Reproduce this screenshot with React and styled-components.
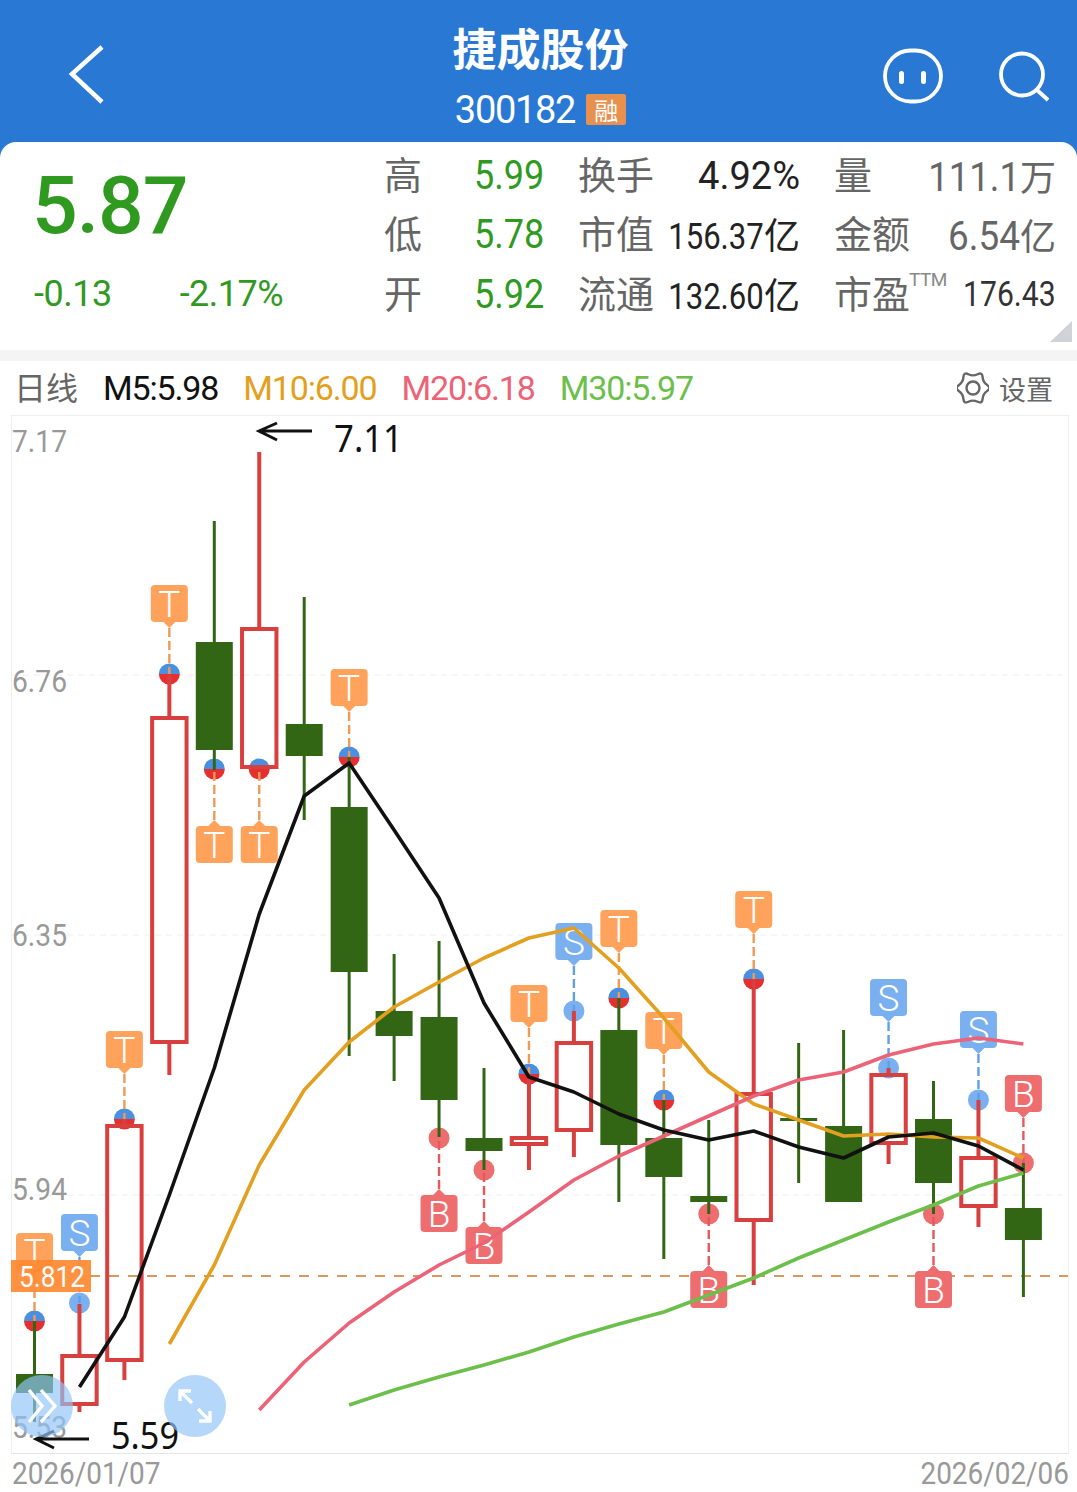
import React from "react";
import styled, { createGlobalStyle } from "styled-components";

const NUM = `"Roboto", "Noto Sans CJK SC", sans-serif`;
const CJK = `"Noto Sans CJK SC", "Roboto", sans-serif`;

const GlobalStyle = createGlobalStyle`
    html, body {
        margin: 0;
        padding: 0;
        background: #fff;
    }
    body {
        width: 1077px;
        height: 1492px;
        overflow: hidden;
        font-family: ${NUM};
    }
`;

const Page = styled.div`
    width: 1077px;
    height: 1492px;
    background: #fff;
    overflow: hidden;
`;

const Header = styled.header`
    height: 160px;
    background: #2878d4;
    display: grid;
    grid-template-columns: 1fr auto 1fr;
    align-items: start;
    color: #fff;
`;

const BackButton = styled.div`
    padding: 44px 0 0 68px;
    svg {
        display: block;
    }
`;

const TitleBlock = styled.div`
    display: flex;
    flex-direction: column;
    align-items: center;
    padding-top: 19px;
    margin-left: 4px;
`;

const Title = styled.div`
    font-family: ${CJK};
    font-weight: 700;
    font-size: 44px;
    line-height: 56px;
`;

const CodeRow = styled.div`
    display: flex;
    align-items: center;
    gap: 11px;
    margin-top: 10px;
`;

const Code = styled.span`
    font-family: ${NUM};
    font-size: 38px;
    line-height: 50px;
    letter-spacing: -1.3px;
`;

const Badge = styled.span`
    width: 40px;
    height: 31px;
    margin-bottom: 2px;
    border-radius: 2px;
    background: #e8914f;
    font-family: ${CJK};
    font-size: 24px;
    line-height: 31px;
    text-align: center;
`;

const HeaderIcons = styled.div`
    display: flex;
    justify-content: flex-end;
    gap: 56px;
    padding: 48px 28px 0 0;
`;

const Panel = styled.section`
    position: relative;
    height: 208px;
    margin-top: -18px;
    background: #fff;
    border-radius: 16px 16px 0 0;
    display: flex;
`;

const PriceBlock = styled.div`
    width: 384px;
    padding: 14px 0 0 34px;
    box-sizing: border-box;
    color: #2f9a1f;
`;

const Price = styled.div`
    font-family: ${NUM};
    font-weight: 500;
    font-size: 80.5px;
    line-height: 100px;
    letter-spacing: -1px;
    margin-left: -2px;
`;

const ChangeRow = styled.div`
    display: flex;
    gap: 68px;
    margin-top: 16px;
    font-size: 36px;
    line-height: 44px;
    letter-spacing: -0.5px;
`;

const StatsGrid = styled.div`
    padding-top: 4px;
    display: grid;
    grid-template-columns: 90px 104px 76px 146px 144px 112px;
    grid-auto-rows: 59.5px;
    align-items: center;
    width: 672px;
`;

const StatLabel = styled.span`
    font-family: ${CJK};
    font-size: 38px;
    line-height: 44px;
    color: #666;
    white-space: nowrap;
    position: relative;
    padding: 0 0 6px ${(p) => p.$indent || 0}px;
    sup {
        font-family: ${NUM};
        font-size: 19px;
        position: absolute;
        left: 109px;
        top: -2px;
        line-height: 24px;
        letter-spacing: -0.5px;
        color: #888;
    }
`;

const StatValue = styled.span`
    font-family: ${NUM};
    font-size: ${(p) => p.$size || 37}px;
    line-height: 44px;
    white-space: nowrap;
    color: ${(p) => p.$color};
    justify-self: ${(p) => (p.$left ? "start" : "end")};
    small {
        font-family: ${CJK};
        font-size: 36px;
    }
`;

const Digits = styled.span`
    display: inline-block;
    transform: scaleX(${(p) => p.$x || 1});
    transform-origin: ${(p) => (p.$left ? "left" : "right")} center;
`;

const CornerMark = styled.div`
    position: absolute;
    right: 5px;
    bottom: 8px;
    width: 22px;
    height: 21px;
    background: #cfd2d6;
    clip-path: polygon(100% 0, 100% 100%, 0 100%);
`;

const Divider = styled.div`
    height: 11px;
    background: #f4f4f4;
`;

const Toolbar = styled.div`
    height: 54px;
    padding: 0 24px 0 16px;
    display: flex;
    align-items: center;
    gap: 25px;
    font-size: 34px;
`;

const PeriodLabel = styled.span`
    font-family: ${CJK};
    font-size: 32px;
    color: #666;
    padding-bottom: 4px;
    margin-left: -2px;
`;

const MaText = styled.span`
    color: ${(p) => p.$color};
    letter-spacing: -1.15px;
`;

const Settings = styled.div`
    margin-left: auto;
    display: flex;
    align-items: center;
    gap: 10px;
    font-family: ${CJK};
    font-size: 27px;
    color: #666;
`;

const ChartBox = styled.div`
    position: relative;
    margin: 0 8px 0 11px;
    width: 1058px;
    height: 1039px;
    border: 1px solid #eee;
    border-bottom-color: #e6e6e6;
    box-sizing: border-box;
    svg {
        display: block;
        overflow: visible;
    }
`;

const FloatButton = styled.div`
    position: absolute;
    left: ${(p) => p.$left}px;
    top: 959px;
    width: 62px;
    height: 62px;
    border-radius: 50%;
    background: rgba(144, 196, 248, 0.68);
    display: flex;
    align-items: center;
    justify-content: center;
`;

const DateRow = styled.div`
    display: flex;
    justify-content: space-between;
    padding: 1px 8px 0 12px;
    font-size: 31px;
    line-height: 38px;
    color: #999;
`;

const GridLine = styled.line`
    stroke: #eee;
    stroke-width: 1;
    stroke-dasharray: 6 5;
`;

const AxisText = styled.text`
    font-family: ${NUM};
    font-size: 31px;
    fill: #999;
`;

const PriceLine = styled.line`
    stroke: #d8995f;
    stroke-width: 2;
    stroke-dasharray: 10 9;
`;

const CurrentBox = styled.rect`
    fill: #ff8a33;
    opacity: 0.93;
`;

const CurrentText = styled.text`
    font-family: ${NUM};
    font-size: 30px;
    fill: #fff;
`;

const Wick = styled.line`
    stroke: ${(p) => (p.$up ? "#d83f3f" : "#336614")};
    stroke-width: ${(p) => (p.$up ? 4 : 3)};
`;

const HollowBody = styled.rect`
    fill: none;
    stroke: #d83f3f;
    stroke-width: 4;
`;

const SolidBody = styled.rect`
    fill: #336614;
`;

const MaPath = styled.polyline`
    fill: none;
    stroke: ${(p) => p.$color};
    stroke-width: 3.6;
    stroke-linejoin: round;
`;

const Connector = styled.line`
    stroke: ${(p) => p.$color};
    stroke-width: 2.4;
    stroke-dasharray: 9 4;
`;

const TagText = styled.text`
    font-family: "Roboto", sans-serif;
    font-weight: 300;
    font-size: 37px;
    fill: #fff;
    text-anchor: middle;
`;

const Extreme = styled.text`
    font-family: "Noto Sans", sans-serif;
    font-size: 38px;
    fill: #111;
`;

const ArrowLine = styled.path`
    fill: none;
    stroke: #111;
    stroke-width: 3;
`;

const CX = (i) => 34.5 + i * 44.95;

// up, high, low, body top, body bottom (page pixels)
const candles = [
    [0, 1321, 1422, 1374, 1393],
    [1, 1304, 1412, 1356, 1404],
    [1, 1119, 1380, 1126, 1360],
    [1, 675, 1075, 718, 1042],
    [0, 521, 770, 642, 750],
    [1, 452, 768, 629, 767],
    [0, 597, 820, 724, 756],
    [0, 757, 1056, 807, 972],
    [0, 954, 1081, 1011, 1036],
    [0, 941, 1137, 1017, 1100],
    [0, 1068, 1170, 1138, 1151],
    [1, 1074, 1170, 1138, 1144],
    [1, 1011, 1157, 1043, 1130],
    [0, 998, 1202, 1030, 1145],
    [0, 1100, 1259, 1138, 1177],
    [0, 1120, 1214, 1196, 1202],
    [1, 979, 1285, 1094, 1220],
    [0, 1043, 1183, 1118, 1121],
    [0, 1030, 1202, 1126, 1202],
    [1, 1068, 1164, 1075, 1143],
    [0, 1081, 1214, 1119, 1183],
    [1, 1100, 1227, 1158, 1206],
    [0, 1163, 1297, 1208, 1240],
];

// kind, candle index, circle y, tag top y (tag under circle when below)
const markers = [
    ["T", 0, 1321, 1233],
    ["S", 1, 1303, 1214],
    ["T", 2, 1119, 1031],
    ["T", 3, 674, 585],
    ["T", 4, 769, 826],
    ["T", 5, 769, 826],
    ["T", 7, 757, 669],
    ["B", 9, 1138, 1195],
    ["B", 10, 1170, 1227],
    ["T", 11, 1074, 985],
    ["S", 12, 1011, 923],
    ["T", 13, 998, 910],
    ["T", 14, 1100, 1012],
    ["B", 15, 1214, 1271],
    ["T", 16, 979, 891],
    ["S", 19, 1068, 979],
    ["B", 20, 1214, 1271],
    ["S", 21, 1100, 1011],
    ["B", 22, 1163, 1075],
];

const markerColors = {
    T: { tag: "#ffa35c", line: "#ef9a55" },
    S: { tag: "#7ab0ef", line: "#5f9fe8" },
    B: { tag: "#ee6e70", line: "#e5585c" },
};

const ma5 = [1387, 1317, 1195, 1068, 914, 796, 763, 830, 898, 1003, 1077, 1092, 1114, 1130, 1140, 1131, 1147, 1158, 1137, 1133, 1146, 1170];
const ma10 = [1344, 1265, 1165, 1090, 1042, 1007, 982, 958, 938, 928, 968, 1018, 1072, 1104, 1120, 1136, 1134, 1137, 1138, 1158];
const ma20 = [1410, 1362, 1323, 1292, 1265, 1243, 1212, 1180, 1156, 1136, 1116, 1096, 1080, 1072, 1055, 1044, 1038, 1044];
const ma30 = [1405, 1390, 1377, 1365, 1352, 1337, 1324, 1312, 1295, 1278, 1258, 1240, 1222, 1205, 1186, 1173];

const points = (values, start) =>
    values.map((y, i) => `${CX(start + i)},${y}`).join(" ");

const tagPath = (x, top, below) => {
    const l = x - 18.5;
    const r = x + 18.5;
    const b = top + 37;
    return below
        ? `M${l + 4} ${top}H${x - 6}L${x} ${top - 6}L${x + 6} ${top}H${r - 4}Q${r} ${top} ${r} ${top + 4}V${b - 4}Q${r} ${b} ${r - 4} ${b}H${l + 4}Q${l} ${b} ${l} ${b - 4}V${top + 4}Q${l} ${top} ${l + 4} ${top}Z`
        : `M${l + 4} ${top}H${r - 4}Q${r} ${top} ${r} ${top + 4}V${b - 4}Q${r} ${b} ${r - 4} ${b}H${x + 6}L${x} ${b + 6}L${x - 6} ${b}H${l + 4}Q${l} ${b} ${l} ${b - 4}V${top + 4}Q${l} ${top} ${l + 4} ${top}Z`;
};

// wavy six-lobed outline of the settings gear
const gearPath = () => {
    const at = (k) => {
        const r = k % 2 === 0 ? 18.5 : 11.5;
        const a = (k * Math.PI) / 6;
        return [16 + r * Math.cos(a), 16 + r * Math.sin(a)];
    };
    const mid = (k) => {
        const [x1, y1] = at(k);
        const [x2, y2] = at(k + 1);
        return `${((x1 + x2) / 2).toFixed(2)} ${((y1 + y2) / 2).toFixed(2)}`;
    };
    let d = `M${mid(11)}`;
    for (let k = 0; k < 12; k++) {
        const [x, y] = at(k);
        d += `Q${x.toFixed(2)} ${y.toFixed(2)} ${mid(k)}`;
    }
    return `${d}Z`;
};

function Marker({ kind, index, y, top }) {
    const x = CX(index);
    const below = top > y;
    const colors = markerColors[kind];
    return (
        <g>
            {kind === "T" ? (
                <>
                    <path d={`M${x - 10.5} ${y}A10.5 10.5 0 0 1 ${x + 10.5} ${y}Z`} fill='#4a90e2' />
                    <path d={`M${x - 10.5} ${y}A10.5 10.5 0 0 0 ${x + 10.5} ${y}Z`} fill='#e5302f' />
                </>
            ) : (
                <circle cx={x} cy={y} r={10.5} fill={colors.tag} />
            )}
            <Connector
                x1={x}
                x2={x}
                y1={below ? top - 6 : top + 43}
                y2={y}
                $color={colors.line}
            />
            <path d={tagPath(x, top, below)} fill={colors.tag} />
            <TagText x={x} y={top + 32}>
                {kind}
            </TagText>
        </g>
    );
}

function Candle({ data, index }) {
    const [up, high, low, top, bottom] = data;
    const x = CX(index);
    return (
        <g>
            <Wick x1={x} x2={x} y1={high} y2={top} $up={up} />
            <Wick x1={x} x2={x} y1={bottom} y2={low} $up={up} />
            {up ? (
                <HollowBody x={x - 17.2} y={top} width={34.4} height={bottom - top} />
            ) : (
                <SolidBody x={x - 18.5} y={top} width={37} height={bottom - top} />
            )}
        </g>
    );
}

const axisLabels = [
    ["7.17", 452],
    ["6.76", 692],
    ["6.35", 946],
    ["5.94", 1200],
    ["5.53", 1438],
];

function Chart() {
    return (
        <svg width={1056} height={1037} viewBox='12 416 1056 1037'>
            {[675, 935, 1195].map((y) => (
                <GridLine key={y} x1={12} x2={1068} y1={y} y2={y} />
            ))}
            <PriceLine x1={90} x2={1068} y1={1276} y2={1276} />
            {markers.map(([kind, index, y, top]) => (
                <Marker key={index} kind={kind} index={index} y={y} top={top} />
            ))}
            <CurrentBox x={11} y={1260} width={80} height={32} />
            <CurrentText x={19} y={1287} textLength={66} lengthAdjust='spacingAndGlyphs'>
                5.812
            </CurrentText>
            {candles.map((c, i) => (
                <Candle key={i} data={c} index={i} />
            ))}
            <MaPath points={points(ma10, 3)} $color='#e3a020' />
            <MaPath points={points(ma20, 5)} $color='#ec6378' />
            <MaPath points={points(ma30, 7)} $color='#6cbf4b' />
            <MaPath points={points(ma5, 1)} $color='#111' />
            {axisLabels.map(([label, y]) => (
                <AxisText key={label} x={12} y={y} textLength={55} lengthAdjust='spacingAndGlyphs'>
                    {label}
                </AxisText>
            ))}
            <ArrowLine d='M312 431H259M277 423L259 431L277 440' />
            <Extreme x={334} y={452} textLength={69} lengthAdjust='spacingAndGlyphs'>7.11</Extreme>
            <ArrowLine d='M89 1439H36M54 1431L36 1439L54 1448' />
            <Extreme x={111} y={1449} textLength={68} lengthAdjust='spacingAndGlyphs'>5.59</Extreme>
        </svg>
    );
}

const stats = [
    {
        low: ["高", "5.99"],
        mid: ["换手", "4.92%", 38, 1, ""],
        high: ["量", "111.1", 41, 0.89, "万"],
    },
    {
        low: ["低", "5.78"],
        mid: ["市值", "156.37", 37, 0.84, "亿"],
        high: ["金额", "6.54", 41, 0.9, "亿"],
    },
    {
        low: ["开", "5.92"],
        mid: ["流通", "132.60", 37, 0.84, "亿"],
        high: ["市盈", "176.43", 35, 0.86, ""],
    },
];

export default function App() {
    return (
        <Page>
            <GlobalStyle />
            <Header>
                <BackButton>
                    <svg width='38' height='62' viewBox='0 0 38 62' fill='none'>
                        <path d='M34 3L4 30L34 58' stroke='#fff' strokeWidth='4.5' />
                    </svg>
                </BackButton>
                <TitleBlock>
                    <Title>捷成股份</Title>
                    <CodeRow>
                        <Code>300182</Code>
                        <Badge>融</Badge>
                    </CodeRow>
                </TitleBlock>
                <HeaderIcons>
                    <svg width='60' height='58' viewBox='0 0 60 58' fill='none'>
                        <rect x='2' y='2.5' width='56' height='51' rx='25.5' stroke='#fff' strokeWidth='3.8' />
                        <path d='M18.5 25.5V33.5M40.5 25.5V33.5' stroke='#fff' strokeWidth='5' strokeLinecap='round' />
                    </svg>
                    <svg width='50' height='56' viewBox='0 0 50 56' fill='none'>
                        <circle cx='23' cy='26.5' r='21' stroke='#fff' strokeWidth='3.8' />
                        <path d='M38 42L49 52' stroke='#fff' strokeWidth='3.8' />
                    </svg>
                </HeaderIcons>
            </Header>
            <Panel>
                <PriceBlock>
                    <Price>5.87</Price>
                    <ChangeRow>
                        <span>-0.13</span>
                        <span>-2.17%</span>
                    </ChangeRow>
                </PriceBlock>
                <StatsGrid>
                    {stats.map(({ low, mid, high }, row) => (
                        <React.Fragment key={low[0]}>
                            <StatLabel>{low[0]}</StatLabel>
                            <StatValue $color='#2f9a1f' $left $size={40}>
                                <Digits $x={0.9} $left>{low[1]}</Digits>
                            </StatValue>
                            <StatLabel>{mid[0]}</StatLabel>
                            <StatValue $color='#222' $size={mid[2]}>
                                <Digits $x={mid[3]}>{mid[1]}</Digits>
                                {mid[4] && <small>{mid[4]}</small>}
                            </StatValue>
                            <StatLabel $indent={34}>
                                {high[0]}
                                {row === 2 && <sup>TTM</sup>}
                            </StatLabel>
                            <StatValue $color={row === 2 ? "#333" : "#666"} $size={high[2]}>
                                <Digits $x={high[3]}>{high[1]}</Digits>
                                {high[4] && <small>{high[4]}</small>}
                            </StatValue>
                        </React.Fragment>
                    ))}
                </StatsGrid>
                <CornerMark />
            </Panel>
            <Divider />
            <Toolbar>
                <PeriodLabel>日线</PeriodLabel>
                <MaText $color='#111'>M5:5.98</MaText>
                <MaText $color='#e3a020'>M10:6.00</MaText>
                <MaText $color='#ec6378'>M20:6.18</MaText>
                <MaText $color='#6cbf4b'>M30:5.97</MaText>
                <Settings>
                    <svg width='32' height='32' viewBox='0 0 32 32' fill='none' stroke='#666' strokeWidth='2.4'>
                        <path d={gearPath()} />
                        <circle cx='16' cy='16' r='6.5' />
                    </svg>
                    设置
                </Settings>
            </Toolbar>
            <ChartBox>
                <Chart />
                <FloatButton $left={-1}>
                    <svg width='32' height='36' viewBox='0 0 32 36' fill='none' stroke='#fff' strokeWidth='3.4'>
                        <path d='M3 2L16 18L3 34M15 2L29 18L15 34' />
                    </svg>
                </FloatButton>
                <FloatButton $left={152}>
                    <svg width='34' height='34' viewBox='0 0 34 34' fill='none' stroke='#fff' strokeWidth='3.4'>
                        <path d='M2 12V2H13M2 2L14 14M32 22V32H21M32 32L20 20' />
                    </svg>
                </FloatButton>
            </ChartBox>
            <DateRow>
                <Digits $x={0.9} $left>2026/01/07</Digits>
                <Digits $x={0.9}>2026/02/06</Digits>
            </DateRow>
        </Page>
    );
}
